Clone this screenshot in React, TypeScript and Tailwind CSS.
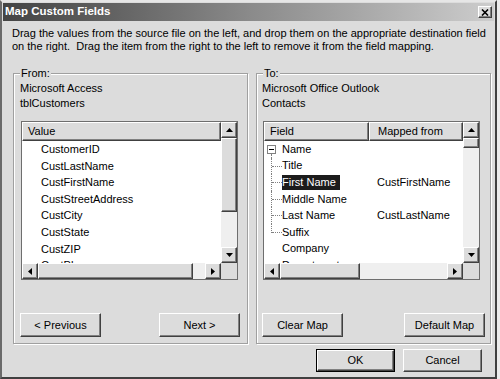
import React from 'react';

// classic 3D edges
const raised = 'border border-t-white border-l-white border-r-[#404040] border-b-[#404040] shadow-[inset_-1px_-1px_0_#808080]';

type Dir = 'up' | 'down' | 'left' | 'right';

function Tri({ dir }: { dir: Dir }) {
  const pts = { up: '3.5,0 7,4 0,4', down: '0,0 7,0 3.5,4', left: '4,0 4,7 0,3.5', right: '0,0 4,3.5 0,7' }[dir];
  const vertical = dir === 'up' || dir === 'down';
  return (
    <svg width={vertical ? 7 : 4} height={vertical ? 4 : 7}>
      <polygon points={pts} fill="#000" />
    </svg>
  );
}

function ScrollBtn({ dir }: { dir: Dir }) {
  return (
    <div className={`w-[16px] h-[16px] shrink-0 bg-[#dcdcdc] flex items-center justify-center ${raised}`}>
      <Tri dir={dir} />
    </div>
  );
}

function VScroll({ thumb }: { thumb: string }) {
  return (
    <div className="w-[16px] shrink-0 flex flex-col bg-[#efefef]">
      <ScrollBtn dir="up" />
      <div className={`${thumb} shrink-0 bg-[#dcdcdc] ${raised}`} />
      <div className="flex-1" />
      <ScrollBtn dir="down" />
    </div>
  );
}

function HScroll({ thumb }: { thumb: string }) {
  return (
    <div className="flex h-[16px]">
      <div className="w-[199px] flex bg-[#efefef]">
        <ScrollBtn dir="left" />
        <div className={`${thumb} shrink-0 bg-[#dcdcdc] ${raised}`} />
        <div className="flex-1" />
        <ScrollBtn dir="right" />
      </div>
      <div className="w-[16px] bg-[#dcdcdc]" />
    </div>
  );
}

function ListFrame({ children, vthumb, hthumb }: { children: React.ReactNode; vthumb: string; hthumb: string }) {
  return (
    <div className="w-[217px] h-[159px] border border-[#6e6e6e] bg-white flex flex-col">
      <div className="flex h-[141px]">
        <div className="w-[199px] overflow-hidden">{children}</div>
        <VScroll thumb={vthumb} />
      </div>
      <HScroll thumb={hthumb} />
    </div>
  );
}

function Button({ label, w = 'w-[81px]' }: { label: string; w?: string }) {
  return (
    <div className={`${w} h-[24px] bg-[#dcdcdc] flex items-center justify-center ${raised}`}>
      {label}
    </div>
  );
}

function GroupBox({ title, children, pad }: { title: string; children: React.ReactNode; pad: string }) {
  return (
    <div className={`relative w-[235px] h-[271px] border border-[#a0a0a0] shadow-[1px_1px_0_#fff,inset_1px_1px_0_#fff] ${pad} pt-[7px] pb-[6px] flex flex-col`}>
      <span className="absolute left-[6px] top-[-7px] px-[1px] bg-[#dcdcdc] leading-[13px]">{title}</span>
      {children}
    </div>
  );
}

const sourceFields = ['CustomerID', 'CustLastName', 'CustFirstName', 'CustStreetAddress', 'CustCity', 'CustState', 'CustZIP', 'CustPhone'];

const targetRows: { name: string; from?: string; kind: 'root' | 'child' | 'last' | 'plain'; selected?: boolean }[] = [
  { name: 'Name', kind: 'root' },
  { name: 'Title', kind: 'child' },
  { name: 'First Name', from: 'CustFirstName', kind: 'child', selected: true },
  { name: 'Middle Name', kind: 'child' },
  { name: 'Last Name', from: 'CustLastName', kind: 'child' },
  { name: 'Suffix', kind: 'last' },
  { name: 'Company', kind: 'plain' },
  { name: 'Department', kind: 'plain' },
];

function TreeGutter({ kind }: { kind: 'root' | 'child' | 'last' | 'plain' }) {
  return (
    <div className="relative w-[18px] h-full shrink-0">
      {kind === 'root' && (
        <>
          <div className="absolute left-[3px] top-[4px] w-[9px] h-[9px] border border-[#808080] bg-white flex items-center justify-center">
            <div className="w-[5px] h-[1px] bg-black" />
          </div>
          <div className="absolute left-[7px] top-[13px] bottom-0 border-l border-dotted border-[#808080]" />
        </>
      )}
      {(kind === 'child' || kind === 'last') && (
        <>
          <div className={`absolute left-[7px] top-0 border-l border-dotted border-[#808080] ${kind === 'last' ? 'h-[9px]' : 'bottom-0'}`} />
          <div className="absolute left-[8px] top-[8px] w-[10px] border-t border-dotted border-[#808080]" />
        </>
      )}
    </div>
  );
}

export default function App() {
  return (
    <div className="w-[500px] h-[379px] bg-[#ececec] font-['Liberation_Sans',Arial,sans-serif] text-[11px] text-black overflow-hidden">
      <div className="w-[497px] h-[379px] bg-[#dcdcdc] border-l-2 border-l-[#6a6a6a] border-r-2 border-r-[#404040] border-b-2 border-b-[#404040] border-t-2 border-t-[#e6e6e6] pt-[1px] px-[1px] flex flex-col">
        {/* Title bar */}
        <div className="h-[18px] bg-linear-to-r from-[#444444] via-[#8a8a8a] to-[#cdcdcd] flex items-center justify-between pl-[2px] pr-[2px]">
          <span className="text-white font-bold text-[11.5px]">Map Custom Fields</span>
          <div className={`w-[14px] h-[12px] bg-[#dcdcdc] flex items-center justify-center ${raised}`}>
            <svg width="8" height="7" viewBox="0 0 8 7">
              <path d="M1 0.5 L7 6.5 M7 0.5 L1 6.5" stroke="#000" strokeWidth="1.6" />
            </svg>
          </div>
        </div>

        <p className="ml-[9px] mt-[6px] leading-[13px] whitespace-pre">
          {'Drag the values from the source file on the left, and drop them on the appropriate destination field\non the right.  Drag the item from the right to the left to remove it from the field mapping.'}
        </p>

        <div className="flex gap-[8px] ml-[10px] mt-[20px]">
          <GroupBox title="From:" pad="px-[6px]">
            <div className="leading-[15px]">Microsoft Access</div>
            <div className="leading-[15px]">tblCustomers</div>
            <div className="mt-[10px] ml-[1px]">
              <ListFrame vthumb="h-[74px]" hthumb="w-[155px]">
                <div className={`h-[19px] bg-[#dcdcdc] flex items-center pl-[5px] ${raised}`}>Value</div>
                {sourceFields.map((f) => (
                  <div key={f} className="h-[16.6px] leading-[16.6px] pl-[19px] whitespace-nowrap">{f}</div>
                ))}
              </ListFrame>
            </div>
            <div className="mt-[33px] flex justify-between pr-[1px]">
              <Button label="< Previous" />
              <Button label="Next >" />
            </div>
          </GroupBox>

          <GroupBox title="To:" pad="px-[5px]">
            <div className="leading-[15px]">Microsoft Office Outlook</div>
            <div className="leading-[15px]">Contacts</div>
            <div className="mt-[10px] ml-[1px]">
              <ListFrame vthumb="h-[10px]" hthumb="w-[80px]">
                <div className="h-[19px] flex">
                  <div className={`w-[105px] bg-[#dcdcdc] flex items-center pl-[5px] ${raised}`}>Field</div>
                  <div className={`flex-1 bg-[#dcdcdc] flex items-center pl-[8px] ${raised}`}>Mapped from</div>
                </div>
                {targetRows.map((r) => (
                  <div key={r.name} className="h-[16.6px] flex items-stretch whitespace-nowrap">
                    <div className="w-[105px] flex shrink-0">
                      <TreeGutter kind={r.kind} />
                      <span className={`self-center leading-[15px] ${r.selected ? 'bg-[#1c1c1c] text-white pr-[4px]' : ''}`}>{r.name}</span>
                    </div>
                    <div className="pl-[8px] self-center">{r.from ?? ''}</div>
                  </div>
                ))}
              </ListFrame>
            </div>
            <div className="mt-[33px] flex justify-between">
              <Button label="Clear Map" />
              <Button label="Default Map" />
            </div>
          </GroupBox>
        </div>

        <div className="mt-[5px] flex justify-end gap-[8px] pr-[12px]">
          <div className="w-[79px] h-[23px] border border-black">
            <div className={`w-full h-full bg-[#dcdcdc] flex items-center justify-center ${raised}`}>OK</div>
          </div>
          <div className={`w-[79px] h-[23px] bg-[#dcdcdc] flex items-center justify-center ${raised}`}>Cancel</div>
        </div>
      </div>
    </div>
  );
}
